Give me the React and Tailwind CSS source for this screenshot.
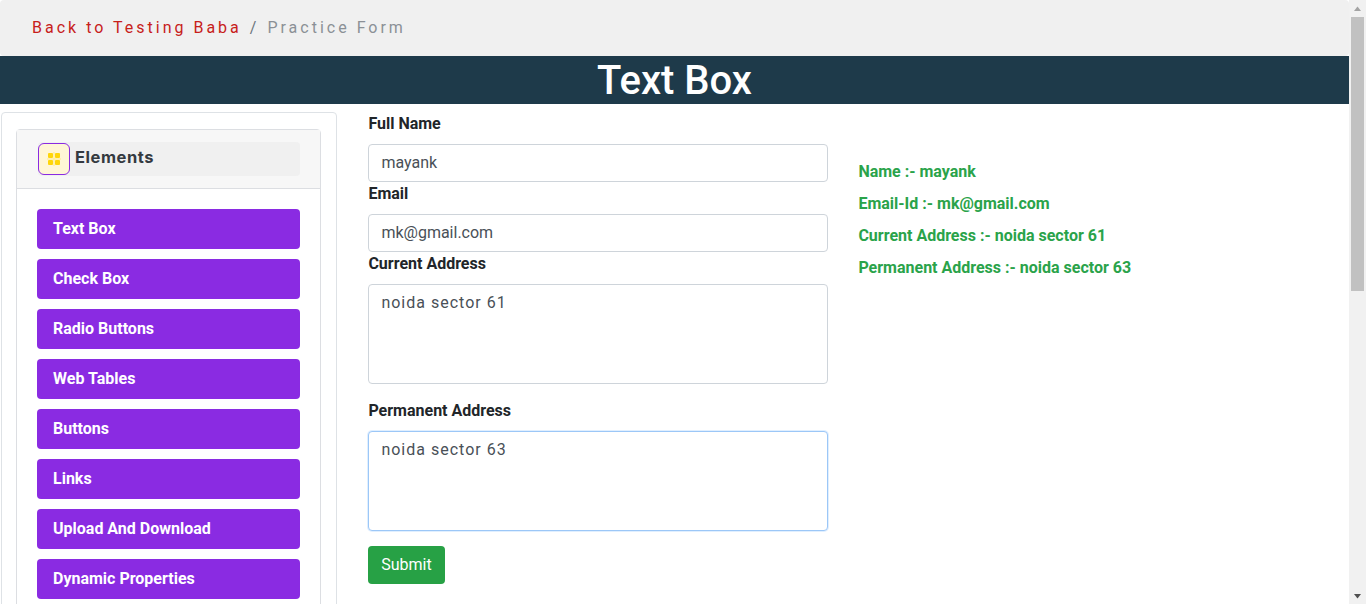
import { useState } from 'react'

const menuItems = [
  'Text Box',
  'Check Box',
  'Radio Buttons',
  'Web Tables',
  'Buttons',
  'Links',
  'Upload And Download',
  'Dynamic Properties',
]

const results = [
  'Name :- mayank',
  'Email-Id :- mk@gmail.com',
  'Current Address :- noida sector 61',
  'Permanent Address :- noida sector 63',
]

function Scrollbar() {
  return (
    <div className="w-[17px] shrink-0 bg-[#f1f1f1] flex flex-col items-center">
      <div className="h-[17px] w-full flex items-center justify-center">
        <svg width="9" height="6" viewBox="0 0 9 6">
          <path d="M4.5 0.5 L8 5 L1 5 Z" fill="#a3a3a3" />
        </svg>
      </div>
      <div className="w-[13px] h-[274px] bg-[#c1c1c1]" />
      <div className="flex-1" />
      <div className="h-[17px] w-full flex items-center justify-center">
        <svg width="9" height="6" viewBox="0 0 9 6">
          <path d="M1 1 L8 1 L4.5 5.5 Z" fill="#505050" />
        </svg>
      </div>
    </div>
  )
}

export default function App() {
  const [name, setName] = useState('mayank')
  const [email, setEmail] = useState('mk@gmail.com')
  const [current, setCurrent] = useState('noida sector 61')
  const [permanent, setPermanent] = useState('noida sector 63')

  const inputClass =
    'block w-full h-[38px] pl-3 pr-3 pb-[2px] border border-[#ced4da] rounded bg-white text-[16px] text-[#495057] outline-none'
  const areaClass =
    'block w-full h-[100px] pl-3 pr-3 pt-[6px] pb-[6px] border rounded bg-white text-[16px] leading-6 text-[#495057] tracking-[1px] outline-none resize-none'
  const labelClass = 'block h-6 mb-2 text-[16px] leading-6 font-bold text-[#212529]'

  return (
    <div className="h-[604px] flex overflow-hidden bg-white font-['Roboto',sans-serif]">
      <div className="flex-1 min-w-0">
        <nav className="h-14 px-8 flex items-center bg-[#f0f0f0] rounded text-[16px] tracking-[3px]">
          <a className="text-[#c7201a]">Back to Testing Baba</a>
          <span className="text-[#6c757d] ml-[8px] mr-[8px]">/</span>
          <span className="text-[#8b9096]">Practice Form</span>
        </nav>
        <h1 className="h-12 bg-[#1e3a4a] text-white text-[40px] leading-[50px] font-medium text-center">
          Text Box
        </h1>

        <div className="flex items-start">
          <aside className="w-[336px] h-[520px] ml-px mt-2 shrink-0 border border-[#dee2e6] rounded pl-[14px] pr-[15px] pt-4">
            <div className="border border-[#dcdee2] rounded h-[520px]">
              <div className="h-[59px] bg-[#f7f7f7] border-b border-[#dcdee2] pl-[21px] pr-5 flex items-center">
                <div className="flex-1 h-[34px] bg-[#f0f0f0] rounded flex items-center">
                  <div className="w-8 h-8 shrink-0 flex items-center justify-center border border-[#8a2be2] rounded-md bg-[#fff6d6]">
                    <svg width="16" height="16" viewBox="0 0 16 16">
                      <path d="M8 1 V15 M1 8 H15" stroke="#ffe98a" strokeWidth="1" />
                      <rect x="2" y="2" width="5" height="5" rx="1" fill="#ffd60a" />
                      <rect x="9" y="2" width="5" height="5" rx="1" fill="#ffd60a" />
                      <rect x="2" y="9" width="5" height="5" rx="1" fill="#ffd60a" />
                      <rect x="9" y="9" width="5" height="5" rx="1" fill="#ffd60a" />
                    </svg>
                  </div>
                  <span className="ml-[5px] -mt-[4px] text-[16.5px] font-bold font-['Inter',sans-serif] tracking-[0.55px] text-[#343a40]">
                    Elements
                  </span>
                </div>
              </div>
              <div className="pt-5 pl-5 pr-5 flex flex-col gap-[10px]">
                {menuItems.map((item) => (
                  <button
                    key={item}
                    className="h-10 shrink-0 px-4 text-left rounded bg-[#8a2be2] text-white text-[16px] font-bold"
                  >
                    {item}
                  </button>
                ))}
              </div>
            </div>
          </aside>

          <form className="w-[460px] ml-[31.4px] pt-2 shrink-0">
            <label className={labelClass}>Full Name</label>
            <input className={inputClass} value={name} onChange={(e) => setName(e.target.value)} />
            <label className={labelClass}>Email</label>
            <input className={inputClass} value={email} onChange={(e) => setEmail(e.target.value)} />
            <label className={labelClass}>Current Address</label>
            <textarea
              className={areaClass + ' border-[#ced4da]'}
              value={current}
              onChange={(e) => setCurrent(e.target.value)}
            />
            <label className={labelClass + ' mt-[15px]'}>Permanent Address</label>
            <textarea
              className={areaClass + ' border-[#9cc7f7] shadow-[0_0_0_1px_rgba(0,123,255,0.12)]'}
              value={permanent}
              onChange={(e) => setPermanent(e.target.value)}
            />
            <button
              type="button"
              className="mt-[15px] h-[38px] w-[77px] pr-px rounded bg-[#27a145] text-white text-[16px]"
            >
              Submit
            </button>
          </form>

          <div className="ml-[30px] pt-[56px] flex flex-col gap-2">
            {results.map((line) => (
              <p key={line} className="h-6 text-[16px] leading-6 font-bold text-[#2aa34a]">
                {line}
              </p>
            ))}
          </div>
        </div>
      </div>
      <Scrollbar />
    </div>
  )
}
